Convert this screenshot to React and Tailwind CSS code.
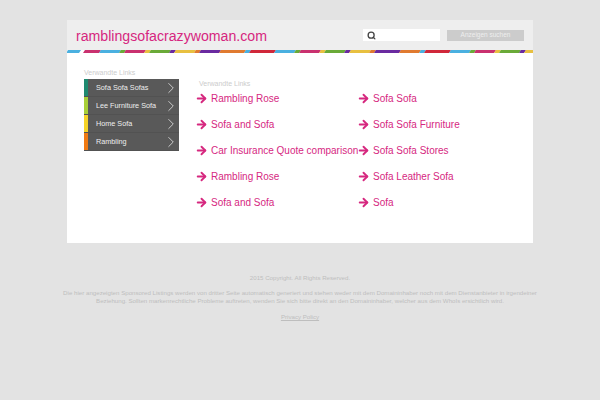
import { ArrowRight, ChevronRight, Search } from "lucide-react";

const segments = [
  [67, 80, "#4ab0e0"], [84, 100, "#c9316f"], [100, 120, "#4ab0e0"], [120, 125, "#6aaa38"], [125, 145, "#c9316f"],
  [145, 150, "#e8c040"], [150, 170, "#6aaa38"], [170, 175, "#6a2aa0"], [175, 195, "#e8c040"], [195, 200, "#e07a30"],
  [200, 220, "#6a2aa0"], [220, 245, "#e07a30"], [245, 250, "#4ab0e0"], [250, 275, "#d0283a"], [275, 295, "#4ab0e0"],
  [295, 300, "#6aaa38"], [300, 320, "#c9316f"], [320, 325, "#e8c040"], [325, 345, "#6aaa38"], [345, 350, "#6a2aa0"],
  [350, 370, "#e8c040"], [370, 375, "#e07a30"], [375, 400, "#6a2aa0"], [400, 420, "#e07a30"], [420, 425, "#4ab0e0"],
  [425, 450, "#d0283a"], [450, 470, "#4ab0e0"], [470, 475, "#6aaa38"], [475, 495, "#c9316f"], [495, 500, "#e8c040"],
  [500, 520, "#6aaa38"], [520, 525, "#6a2aa0"], [525, 535, "#e8c040"],
];

const menu = [
  ["Sofa Sofa Sofas", "bg-[#1f8a70]"],
  ["Lee Furniture Sofa", "bg-[#a8cf38]"],
  ["Home Sofa", "bg-[#f5d327]"],
  ["Rambling", "bg-[#f07a13]"],
];

const links = [
  ["Rambling Rose", "Sofa Sofa"],
  ["Sofa and Sofa", "Sofa Sofa Furniture"],
  ["Car Insurance Quote comparison", "Sofa Sofa Stores"],
  ["Rambling Rose", "Sofa Leather Sofa"],
  ["Sofa and Sofa", "Sofa"],
];

function LinkItem({ label }) {
  return (
    <a href="#" className="flex h-[26px] items-center whitespace-nowrap text-[10px] text-[#d6287f]">
      <ArrowRight size={13} strokeWidth={3.5} className="-ml-[2px] mr-[3px] shrink-0" />
      {label}
    </a>
  );
}

export default function App() {
  return (
    <div className="min-h-[400px] bg-[#e3e3e3] pt-5 font-['Liberation_Sans',Arial,sans-serif]">
      <div className="mx-auto h-[223px] w-[466px] bg-white">
        <div className="flex h-[30px] items-center justify-between bg-[#eeeeee] pl-[9px] pr-[9px]">
          <a href="#" className="pt-1 text-[14.15px] text-[#d6277f]">ramblingsofacrazywoman.com</a>
          <div className="flex items-center gap-[7px]">
            <div className="flex h-3 w-[77px] items-center bg-white pl-[4px]">
              <Search size={9} strokeWidth={3.5} className="text-[#444]" />
            </div>
            <button className="h-[11px] w-[77px] bg-[#cccccc] text-[6.5px] text-[#eeeeee]">Anzeigen suchen</button>
          </div>
        </div>
        <svg width="466" height="3" className="block">
          {segments.map(([a, b, c]) => (
            <polygon key={a} points={`${a - 66},0 ${b - 66},0 ${b - 68},3 ${a - 68},3`} fill={c} />
          ))}
        </svg>
        <div className="flex pl-[17px] pt-[15px]">
          <div className="w-[95px]">
            <p className="text-[7px] leading-[10px] text-[#cccccc]">Verwandte Links</p>
            <ul className="mt-[1px] w-[95px]">
              {menu.map(([label, color]) => (
                <li key={label} className="flex h-[18px] border-b border-[#525252] bg-[#595959] text-[7.25px] text-[#eeeeee]">
                  <span className={`w-1 ${color}`} />
                  <span className="flex flex-1 items-center justify-between pl-2">
                    <span className="pt-[2px]">{label}</span>
                    <ChevronRight size={18} strokeWidth={1} className="-mr-[1px]" />
                  </span>
                </li>
              ))}
            </ul>
          </div>
          <div className="ml-[18px] flex-1 pt-[11px]">
            <p className="pl-[2px] text-[7px] leading-[10px] text-[#cccccc]">Verwandte Links</p>
            <div className="-mt-1">
              {links.map(([left, right]) => (
                <div key={left + right} className="flex">
                  <div className="w-[162px]"><LinkItem label={left} /></div>
                  <LinkItem label={right} />
                </div>
              ))}
            </div>
          </div>
        </div>
      </div>
      <div className="mt-[31px] text-center text-[6.15px] leading-[8px] text-[#bebebe]">
        <p>2015 Copyright. All Rights Reserved.</p>
        <p className="mx-auto mt-[7px] w-[490px]">Die hier angezeigten Sponsored Listings werden von dritter Seite automatisch generiert und stehen weder mit dem Domaininhaber noch mit dem Dienstanbieter in irgendeiner Beziehung. Sollten markenrechtliche Probleme auftreten, wenden Sie sich bitte direkt an den Domaininhaber, welcher aus dem WhoIs ersichtlich wird.</p>
        <a href="#" className="mt-2 block underline">Privacy Policy</a>
      </div>
    </div>
  );
}
